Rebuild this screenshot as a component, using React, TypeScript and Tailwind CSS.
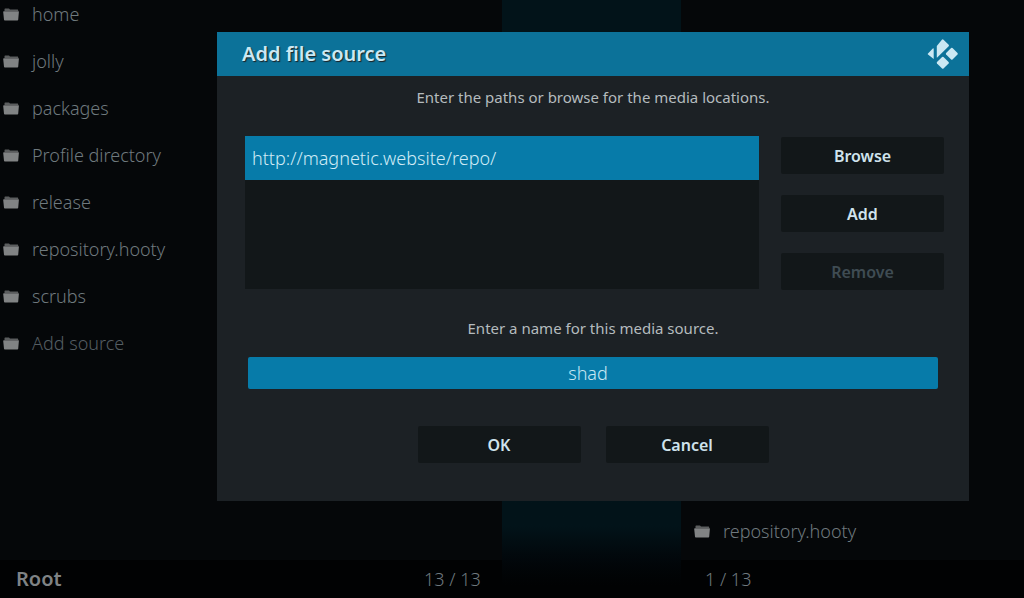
import React, { useState } from "react";

const folders = [
  "home",
  "jolly",
  "packages",
  "Profile directory",
  "release",
  "repository.hooty",
  "scrubs",
];

function FolderIcon() {
  return (
    <svg
      viewBox="0 0 16 13"
      className="h-[13px] w-4 shrink-0"
      aria-hidden="true"
    >
      <path d="M1.5 1 Q1.6 0.4 2.2 0.4 H6 L7 1.6 H14.6 Q15.2 1.6 15.2 2.2 V3 H1.5 Z" fill="#5b5d5e" />
      <path d="M0.8 3.2 H15.4 Q16 3.2 15.9 3.8 L15.2 11.8 Q15.1 12.5 14.4 12.5 H1.8 Q1.1 12.5 1 11.8 L0.2 3.9 Q0.2 3.2 0.8 3.2 Z" fill="#818384" />
    </svg>
  );
}

function KodiLogo() {
  return (
    <svg viewBox="0 0 32 32" className="h-8 w-8" fill="#cbe8f3" aria-label="Kodi" role="img">
      <path d="M9.8 7.9 L14.9 1.8 Q15.7 0.9 16.5 1.7 L21.7 6.8 Q22.3 7.5 21.7 8.2 L10.2 19.6 Q9.8 19.9 9.8 19.3 Z" />
      <path d="M6.7 11.2 V21 L1 16.6 Q0.3 16 1 15.4 L5.8 10.6 Q6.7 9.9 6.7 11.2 Z" />
      <path d="M24.1 10 Q24.8 9.4 25.5 10 L30.5 15 Q31.1 15.7 30.5 16.4 L25.5 21.4 Q24.8 22 24.1 21.4 L19.1 16.4 Q18.5 15.7 19.1 15 Z" />
      <path d="M15.1 19 Q15.8 18.4 16.5 19 L21.6 24.1 Q22.2 24.8 21.6 25.5 L16.5 30.5 Q15.8 31.1 15.1 30.5 L10 25.5 Q9.4 24.8 10 24.1 Z" />
    </svg>
  );
}

function DialogButton({
  children,
  disabled,
}: {
  children: React.ReactNode;
  disabled?: boolean;
}) {
  return (
    <button
      type="button"
      disabled={disabled}
      className="h-[37px] w-[163px] rounded-xs bg-[#121719] text-base font-semibold text-[#cfe3ec] disabled:text-[#3f4c53]"
    >
      {children}
    </button>
  );
}

export default function App() {
  const [name, setName] = useState("shad");

  return (
    <div className="relative min-h-screen overflow-hidden bg-[#050709] font-['Noto_Sans',sans-serif] text-[#6f797e]">
      <main className="grid min-h-screen grid-cols-[49%_1fr_33.5%]">
        <section className="flex flex-col">
          <ul className="flex flex-col gap-[19px] text-lg font-light">
            {folders.map((folder) => (
              <li key={folder} className="flex h-7 items-center gap-[13px] pl-[3px]">
                <FolderIcon />
                <a href="#">{folder}</a>
              </li>
            ))}
            <li className="flex h-7 items-center gap-[13px] pl-[3px] text-[#545d62]">
              <FolderIcon />
              <a href="#">Add source</a>
            </li>
          </ul>
          <footer className="mt-auto flex h-[38px] items-center justify-between bg-[#010203] pl-4 pr-[21px] text-lg">
            <span className="text-xl font-semibold text-[#7f8385]">Root</span>
            <span className="font-light">13 / 13</span>
          </footer>
        </section>
        <div className="bg-linear-to-b from-[#021319] from-88% to-[#010203] to-98%"></div>
        <section className="flex flex-col text-lg font-light">
          <div className="mb-[15px] mt-auto flex h-7 items-center gap-[13px] pl-[13px]">
            <FolderIcon />
            <a href="#">repository.hooty</a>
          </div>
          <footer className="flex h-[38px] items-center bg-[#010203] pl-6">
            1 / 13
          </footer>
        </section>
      </main>

      <div className="absolute inset-0 pl-[217px] pr-[55px] pt-8">
        <div
          role="dialog"
          aria-labelledby="dialog-title"
          className="bg-[#1c2125] pb-[38px]"
        >
          <header className="flex h-11 items-center justify-between bg-[#0c7299] pl-[25px] pr-[10px]">
            <h1
              id="dialog-title"
              className="text-xl font-semibold text-[#cbe8f3] text-shadow-[1px_1px_1px_#1c2125]"
            >
              Add file source
            </h1>
            <KodiLogo />
          </header>
          <p className="pt-[11px] text-center text-[15px] leading-5 text-[#b4bbbe]">
            Enter the paths or browse for the media locations.
          </p>
          <div className="mt-[29px] flex gap-[22px] pl-7 pr-[25px]">
            <ul className="h-[153px] flex-1 bg-[#121719]">
              <li className="flex h-11 items-center bg-[#077ba9] pl-[7px] text-lg font-light text-[#d0ebf6]">
                http://magnetic.website/repo/
              </li>
            </ul>
            <div className="flex flex-col gap-[21px] pt-px">
              <DialogButton>Browse</DialogButton>
              <DialogButton>Add</DialogButton>
              <DialogButton disabled>Remove</DialogButton>
            </div>
          </div>
          <label
            htmlFor="source-name"
            className="mt-7 block text-center text-[15px] leading-5 text-[#b4bbbe]"
          >
            Enter a name for this media source.
          </label>
          <div className="mt-[19px] px-[31px]">
            <input
              id="source-name"
              type="text"
              value={name}
              onChange={(e) => setName(e.target.value)}
              className="block h-8 w-full rounded-xs bg-[#077ba9] pr-[10px] text-center text-lg font-light text-[#c8e8f4] outline-none"
            />
          </div>
          <div className="mt-[37px] flex justify-center gap-[25px]">
            <DialogButton>OK</DialogButton>
            <DialogButton>Cancel</DialogButton>
          </div>
        </div>
      </div>
    </div>
  );
}
